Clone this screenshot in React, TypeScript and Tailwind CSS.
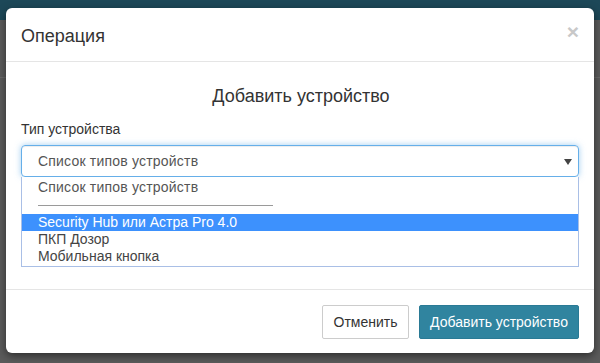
import React from 'react';

const options = ['Security Hub или Астра Pro 4.0', 'ПКП Дозор', 'Мобильная кнопка'];

export default function App() {
  return (
    <div
      className="relative w-[600px] h-[363px] overflow-hidden bg-[#5b5b5b] text-[#333]"
      style={{ fontFamily: '"Liberation Sans", Arial, sans-serif' }}
    >
      {/* backdrop page */}
      <div className="h-[20px] bg-[#1d4858]" />
      <div className="mt-[57px] h-px bg-[#6a6a6a]" />

      {/* Modal */}
      <div className="absolute left-[6px] top-[8px] w-[588px] h-[345px] bg-white rounded-[6px] shadow-[0_3px_9px_rgba(0,0,0,0.5)] flex flex-col">
        {/* Header */}
        <div className="h-[54px] flex items-center justify-between pl-[15px] pr-[15px] border-b border-[#e5e5e5]">
          <span className="text-[18px] leading-[26px] pt-[2px]">Операция</span>
          <span className="text-[21px] font-bold leading-none text-[#c8c8c8] -mt-[6px]">×</span>
        </div>

        {/* Body */}
        <div className="px-[15px] pt-[21px] h-[228px] border-b border-[#e5e5e5]">
          <div className="text-center text-[18px] leading-[26px] pl-[2px]">Добавить устройство</div>
          <div className="mt-[10px] text-[14px] leading-[20px]">Тип устройства</div>
          <div className="mt-[6px] relative">
            <div className="h-[32px] flex items-center justify-between pl-[16px] pr-[6px] border border-[#66afe9] rounded-[4px] shadow-[inset_0_1px_1px_rgba(0,0,0,0.075),0_0_6px_rgba(102,175,233,0.6)] text-[14px] text-[#555]">
              <span className="tracking-[0.2px]">Список типов устройств</span>
              <svg width="8" height="6" viewBox="0 0 8 6" className="mt-[1px]">
                <path d="M0 0h8L4 6z" fill="#444" />
              </svg>
            </div>
            <div className="h-[90px] overflow-hidden border border-t-0 border-[#a9bfe6] bg-white text-[14px] pt-[2px]">
              <div className="h-[17px] leading-[17px] pl-[16px] text-[#555] tracking-[0.2px]">Список типов устройств</div>
              <div className="h-[18px] flex items-center pl-[16px]">
                <div className="w-[235px] h-px bg-[#9a9a9a] mt-[1px]" />
              </div>
              {options.map((o, i) => (
                <div
                  key={o}
                  className={
                    i === 0
                      ? 'h-[17px] leading-[17px] pl-[16px] bg-[#3d91fd] text-white'
                      : 'h-[17px] leading-[17px] pl-[16px] text-[#444]'
                  }
                >
                  {o}
                </div>
              ))}
            </div>
          </div>
        </div>

        {/* Footer */}
        <div className="flex justify-end gap-[10px] px-[15px] pt-[15px]">
          <button className="h-[34px] w-[87px] border border-[#ccc] rounded-[2px] bg-white text-[14px] text-[#333]">
            Отменить
          </button>
          <button className="h-[34px] w-[160px] border border-[#2a7a95] rounded-[2px] bg-[#30849f] text-[14px] text-white">
            Добавить устройство
          </button>
        </div>
      </div>
    </div>
  );
}
